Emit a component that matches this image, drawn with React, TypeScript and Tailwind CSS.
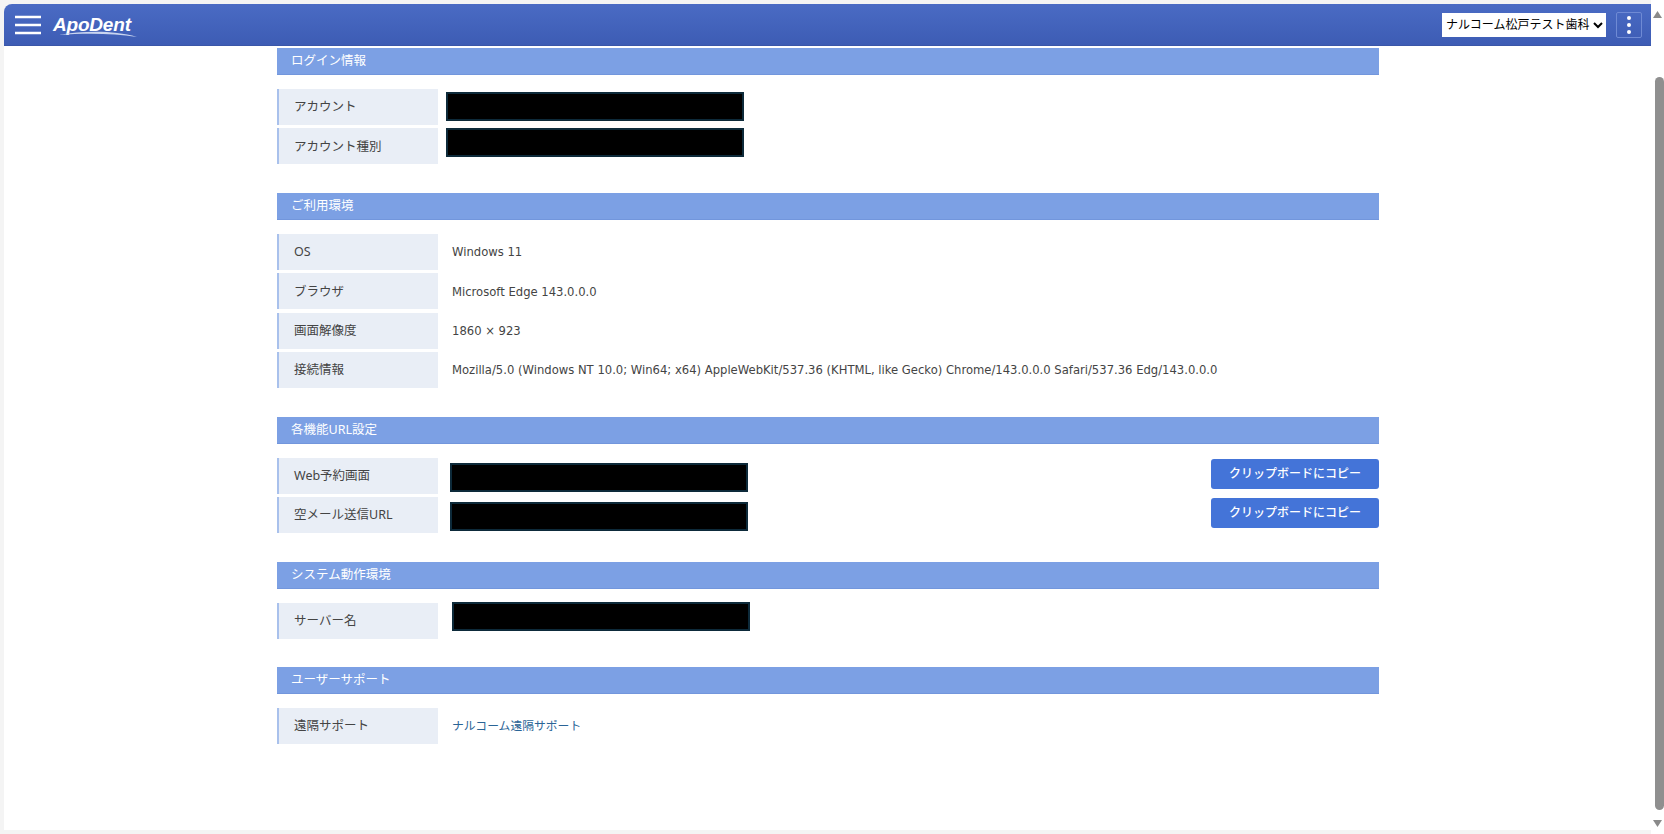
import { ReactNode } from "react";

const font = { fontFamily: '"Noto Sans", "Noto Sans CJK JP", sans-serif' };

const SectionHeading = ({ title }: { title: string }) => (
  <h2 className="h-[27px] pl-[14px] pt-px flex items-center bg-[#7ca0e4] border-b border-[#7296dc] text-[12.5px] font-normal text-white">
    {title}
  </h2>
);

const Row = ({ label, children }: { label: string; children: ReactNode }) => (
  <div className="flex h-9">
    <div className="w-[161px] shrink-0 flex items-center pl-[15px] pt-px bg-[#e9eef6] border-l-2 border-[#a9c1ec] text-[12.5px] text-[#444]">
      {label}
    </div>
    {children}
  </div>
);

const Value = ({ children }: { children: ReactNode }) => (
  <div className="ml-[14px] pt-[2px] flex items-center font-['DejaVu_Sans','Noto_Sans_CJK_JP',sans-serif] text-[11.6px] text-[#444] whitespace-nowrap">{children}</div>
);

const Redacted = ({ className }: { className: string }) => (
  <div className={`w-[298px] h-[29px] shrink-0 bg-black border-2 border-[#0d2a3a] ${className}`} />
);

const CopyButton = ({ className }: { className: string }) => (
  <button className={`ml-auto w-[168px] h-[30px] shrink-0 rounded-[3px] bg-[#4474d8] text-[12px] font-medium text-white ${className}`}>
    クリップボードにコピー
  </button>
);

const Section = ({ title, children }: { title: string; children: ReactNode }) => (
  <section className="mb-[28.6px]">
    <SectionHeading title={title} />
    <div className="mt-[14px] flex flex-col gap-[3.4px]">{children}</div>
  </section>
);

const Header = () => (
  <header className="h-[42px] shrink-0 flex items-center rounded-tl-lg bg-gradient-to-b from-[#4a6bc4] to-[#3d5cb4] border-b border-[#3a56a8] pl-[11px] pr-[9px]">
    <svg width="26" height="20" viewBox="0 0 26 20" className="shrink-0">
      <path d="M0 2h26M0 10h26M0 18h26" stroke="#fff" strokeWidth="2.6" />
    </svg>
    <div className="relative ml-[12px] w-[86px] h-6">
      <span className="text-[19px] font-bold italic leading-6 tracking-[-0.2px] text-white" style={{ fontFamily: '"Liberation Sans", sans-serif' }}>
        ApoDent
      </span>
      <svg width="86" height="8" viewBox="0 0 86 8" className="absolute left-0 top-[17px]">
        <path d="M6 5C30 1 60 0 84 7 60 3 30 3 6 5Z" fill="#c9d5f0" />
      </svg>
    </div>
    <select className="ml-auto w-[164px] h-6 bg-white text-[12px] text-black outline-none">
      <option>ナルコーム松戸テスト歯科</option>
    </select>
    <button className="ml-[10px] w-[26px] h-[26px] flex flex-col items-center justify-center gap-[3px] rounded-[2px] border border-[#6f8ad4]">
      <span className="w-1 h-1 rounded-full bg-white" />
      <span className="w-1 h-1 rounded-full bg-white" />
      <span className="w-1 h-1 rounded-full bg-white" />
    </button>
  </header>
);

const Scrollbar = () => (
  <div className="w-[13px] shrink-0 flex flex-col items-center bg-white pt-[11px] pb-[7px]">
    <svg width="9" height="7" viewBox="0 0 9 7"><path d="M4.5 0L9 7H0Z" fill="#8a8a8a" /></svg>
    <div className="mt-[59px] ml-[3px] w-[9px] h-[733px] rounded-[5px] bg-[#8f8f8f]" />
    <svg width="9" height="7" viewBox="0 0 9 7" className="mt-auto"><path d="M0 0H9L4.5 7Z" fill="#8a8a8a" /></svg>
  </div>
);

export default function App() {
  return (
    <div className="h-[834px] w-[1664px] flex overflow-hidden bg-[#f4f4f4]" style={font}>
      <div className="flex-1 flex flex-col pt-1 pb-1 pl-1">
        <Header />
        <main className="flex-1 bg-white pt-[2px] pl-[273px] pr-[272px]">
          <Section title="ログイン情報">
            <Row label="アカウント"><Redacted className="ml-2 mt-[3px]" /></Row>
            <Row label="アカウント種別"><Redacted className="ml-2 mt-0" /></Row>
          </Section>
          <Section title="ご利用環境">
            <Row label="OS"><Value>Windows 11</Value></Row>
            <Row label="ブラウザ"><Value>Microsoft Edge 143.0.0.0</Value></Row>
            <Row label="画面解像度"><Value>1860 × 923</Value></Row>
            <Row label="接続情報">
              <Value>Mozilla/5.0 (Windows NT 10.0; Win64; x64) AppleWebKit/537.36 (KHTML, like Gecko) Chrome/143.0.0.0 Safari/537.36 Edg/143.0.0.0</Value>
            </Row>
          </Section>
          <Section title="各機能URL設定">
            <Row label="Web予約画面">
              <Redacted className="ml-3 mt-[5px]" />
              <CopyButton className="mt-px" />
            </Row>
            <Row label="空メール送信URL">
              <Redacted className="ml-3 mt-[5px]" />
              <CopyButton className="mt-px" />
            </Row>
          </Section>
          <Section title="システム動作環境">
            <Row label="サーバー名"><Redacted className="ml-[14px] -mt-px" /></Row>
          </Section>
          <Section title="ユーザーサポート">
            <Row label="遠隔サポート">
              <Value><a href="#" className="text-[#2a6496] text-[11.8px]">ナルコーム遠隔サポート</a></Value>
            </Row>
          </Section>
        </main>
      </div>
      <Scrollbar />
    </div>
  );
}
